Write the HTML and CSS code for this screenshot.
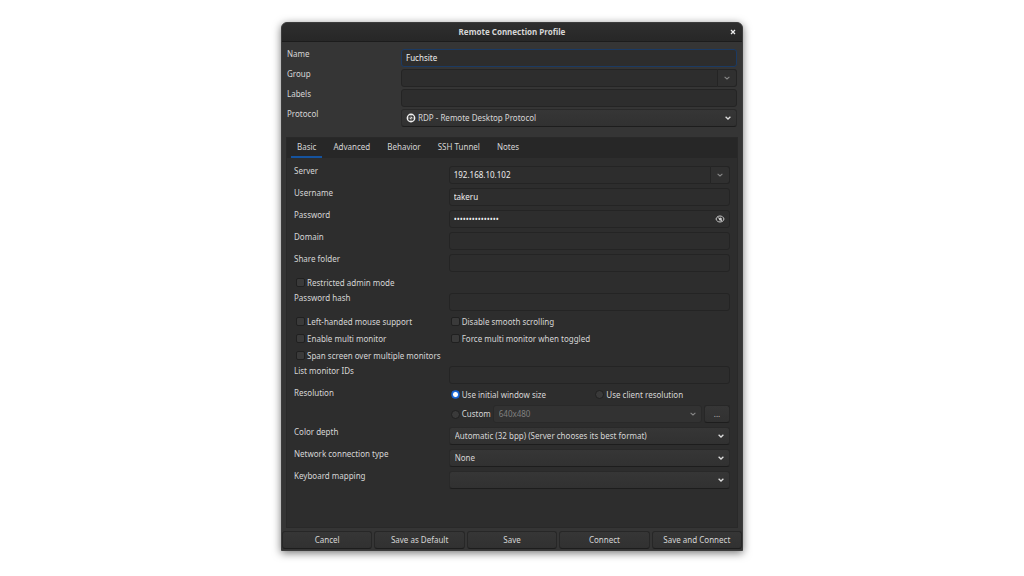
FILE: index.html
```html
<!DOCTYPE html>
<html lang="en">
<head>
    <meta charset="UTF-8">
    <meta name="viewport" content="width=device-width, initial-scale=1.0">
    <title>Remote Connection Profile</title>
    <link rel="stylesheet" href="styles.css">
</head>
<body>
    <form class="window">
        <header class="titlebar">
            <h1>Remote Connection Profile</h1>
            <button type="button" class="close" aria-label="Close">
                <svg viewBox="0 0 6 6" width="6" height="6"><path d="M1 1l4 4M5 1l-4 4" stroke="#eee" stroke-width="1.3"/></svg>
            </button>
        </header>

        <div class="profile">
            <label for="name">Name</label>
            <input type="text" id="name" class="field active" value="Fuchsite">
            <label for="group">Group</label>
            <div class="combo">
                <input type="text" id="group" class="field">
                <button type="button" class="drop" aria-label="Choose group"></button>
            </div>
            <label for="labels">Labels</label>
            <input type="text" id="labels" class="field">
            <label for="protocol">Protocol</label>
            <div class="protocol">
                <svg viewBox="0 0 10 10" width="10" height="10">
                    <circle cx="5" cy="5" r="3.7" fill="none" stroke="#eee" stroke-width="1.4"/>
                    <path d="M5 3.2L6.8 5 5 6.8 3.2 5z" fill="#ddd"/>
                    <path d="M5 1v1.6M5 7.4V9M1 5h1.6M7.4 5H9" stroke="#eee" stroke-width="1.2"/>
                    <path d="M4.3 4.3l1.4 1.4" stroke="#333" stroke-width=".7"/>
                </svg>
                <select id="protocol" class="select"><option>RDP - Remote Desktop Protocol</option></select>
            </div>
        </div>

        <div class="notebook">
            <nav class="tabs">
                <button type="button" class="tab current">Basic</button>
                <button type="button" class="tab">Advanced</button>
                <button type="button" class="tab">Behavior</button>
                <button type="button" class="tab">SSH Tunnel</button>
                <button type="button" class="tab">Notes</button>
            </nav>
            <div class="page">
                <label for="server">Server</label>
                <div class="combo">
                    <input type="text" id="server" class="field" value="192.168.10.102">
                    <button type="button" class="drop" aria-label="Recent servers"></button>
                </div>
                <label for="username">Username</label>
                <input type="text" id="username" class="field" value="takeru">
                <label for="password">Password</label>
                <div class="secret">
                    <input type="password" id="password" value="123456789012345">
                    <button type="button" class="reveal" aria-label="Show password">
                        <svg viewBox="0 0 10 10" width="10" height="10" fill="none" stroke="#ccc">
                            <path d="M1 5c1-4 7-4 8 0c-1 4-7 4-8 0z"/>
                            <circle cx="5.4" cy="5" r="1.5" fill="#ccc" stroke="none"/>
                            <path d="M2.4 3l5 4.4"/>
                        </svg>
                    </button>
                </div>
                <label for="domain">Domain</label>
                <input type="text" id="domain" class="field">
                <label for="share">Share folder</label>
                <input type="text" id="share" class="field">

                <label class="option wide"><input type="checkbox">Restricted admin mode</label>
                <label for="hash">Password hash</label>
                <input type="text" id="hash" class="field">

                <label class="option"><input type="checkbox">Left-handed mouse support</label>
                <label class="option"><input type="checkbox">Disable smooth scrolling</label>
                <label class="option"><input type="checkbox">Enable multi monitor</label>
                <label class="option"><input type="checkbox">Force multi monitor when toggled</label>
                <label class="option wide"><input type="checkbox">Span screen over multiple monitors</label>
                <label for="monitors">List monitor IDs</label>
                <input type="text" id="monitors" class="field">

                <span>Resolution</span>
                <div class="resolution">
                    <label class="option"><input type="radio" name="res" checked>Use initial window size</label>
                    <label class="option"><input type="radio" name="res">Use client resolution</label>
                </div>
                <div class="custom">
                    <label class="option"><input type="radio" name="res">Custom</label>
                    <select class="select" aria-label="Custom resolution" disabled><option>640x480</option></select>
                    <button type="button" class="button more">...</button>
                </div>

                <label for="depth">Color depth</label>
                <select id="depth" class="select"><option>Automatic (32 bpp) (Server chooses its best format)</option></select>
                <label for="network">Network connection type</label>
                <select id="network" class="select"><option>None</option></select>
                <label for="keyboard">Keyboard mapping</label>
                <select id="keyboard" class="select"><option></option></select>
            </div>
        </div>

        <footer class="actions">
            <button type="button" class="button">Cancel</button>
            <button type="button" class="button">Save as Default</button>
            <button type="button" class="button">Save</button>
            <button type="button" class="button">Connect</button>
            <button type="button" class="button">Save and Connect</button>
        </footer>
    </form>
</body>
</html>
```
FILE: styles.css
```css
* {
    box-sizing: border-box;
}
body {
    margin: 0;
    padding: 22px 0;
    background: #fff;
    color: #d6d6d6;
    font: 8px/10px "Noto Sans", "Open Sans", sans-serif;
}
input, select, button {
    margin: 0;
    color: inherit;
    font: inherit;
}
svg {
    display: block;
}
.window {
    max-width: 462px;
    margin: 0 auto;
    border: 1px solid #3c3c3c;
    border-radius: 6px 6px 0 0;
    background: #353535;
    box-shadow: 0 2px 8px rgba(0, 0, 0, 0.55);
}

/* title bar */
.titlebar {
    display: grid;
    grid-template-columns: 18px 1fr 18px;
    align-items: center;
    height: 19px;
    border-bottom: 1px solid #1c1c1c;
    border-radius: 5px 5px 0 0;
    background: linear-gradient(#2e2e2e, #272727);
}
.titlebar h1 {
    grid-column: 2;
    margin: 0;
    font-size: 8px;
    text-align: center;
}
.close {
    display: grid;
    place-items: center;
    padding: 0;
    border: none;
    background: none;
}

/* entries */
.field, .secret {
    width: 100%;
    min-width: 0;
    height: 18px;
    padding: 0 4px 1px;
    border: 1px solid #242424;
    border-radius: 3px;
    background: #2d2d2d;
    color: #eee;
    outline: none;
}
.active, .field:focus {
    border-color: #1b3a63;
}
.combo {
    display: flex;
}
.combo .field {
    flex: 1;
    border-radius: 3px 0 0 3px;
}
.drop {
    width: 19px;
    height: 18px;
    border: 1px solid #242424;
    border-left: none;
    border-radius: 0 3px 3px 0;
    background: #303030 url("data:image/svg+xml,%3Csvg xmlns='http://www.w3.org/2000/svg' width='6' height='4'%3E%3Cpath d='M.6.8L3 3 5.4.8' fill='none' stroke='%23888' stroke-width='1.1'/%3E%3C/svg%3E") center no-repeat;
}
.secret {
    display: flex;
    align-items: center;
}
.secret input {
    flex: 1;
    min-width: 0;
    padding: 0;
    border: none;
    background: none;
    outline: none;
}
.reveal {
    padding: 0;
    border: none;
    background: none;
}
.select {
    width: 100%;
    min-width: 0;
    height: 18px;
    padding: 0 20px 0 5px;
    border: 1px solid #292929;
    border-bottom-color: #1d1d1d;
    border-radius: 3px;
    appearance: none;
    background: url("data:image/svg+xml,%3Csvg xmlns='http://www.w3.org/2000/svg' width='6' height='4'%3E%3Cpath d='M.6.8L3 3 5.4.8' fill='none' stroke='%23ddd' stroke-width='1.3'/%3E%3C/svg%3E") right 5px center no-repeat, linear-gradient(#363636, #313131);
}
.select:disabled {
    color: #808080;
    opacity: 1;
    border-color: #292929;
    background: url("data:image/svg+xml,%3Csvg xmlns='http://www.w3.org/2000/svg' width='6' height='4'%3E%3Cpath d='M.6.8L3 3 5.4.8' fill='none' stroke='%23888' stroke-width='1.1'/%3E%3C/svg%3E") right 5px center no-repeat, #323232;
}
.button {
    height: 18px;
    padding: 0 4px;
    border: 1px solid #272727;
    border-bottom-color: #1d1d1d;
    border-radius: 3px;
    background: linear-gradient(#363636, #313131);
}

/* check boxes and radios */
.option {
    display: flex;
    align-items: center;
    gap: 2px;
    height: 13px;
    padding-left: 2px;
    white-space: nowrap;
}
.option input {
    width: 9px;
    height: 9px;
    border: 1px solid #202020;
    border-radius: 2px;
    appearance: none;
    background: #3a3a3a;
}
.option input[type="radio"] {
    border-radius: 50%;
}
.option input[type="radio"]:checked {
    border-color: #1a5fc4;
    background: radial-gradient(circle, #fff 2px, #1a6be0 3px);
}

/* profile form */
.profile {
    display: grid;
    grid-template-columns: 1fr 3fr;
    gap: 2px;
    padding: 7px 5px 10px;
}
.protocol {
    position: relative;
}
.protocol svg {
    position: absolute;
    top: 4px;
    left: 5px;
}
.protocol .select {
    padding-left: 16px;
}

/* notebook */
.notebook {
    margin: 0 4px;
    border: 1px solid #292929;
    background: #2d2d2d;
}
.tabs {
    display: flex;
    gap: 5px;
    height: 20px;
    padding: 0 4px;
    background: #272727;
}
.tab {
    padding: 0 6px;
    border: none;
    border-bottom: 2px solid transparent;
    background: none;
}
.current {
    border-bottom-color: #15539e;
}
.page {
    display: grid;
    grid-template-columns: 11fr 20fr;
    gap: 4px 0;
    padding: 8px 7px 38px;
}
.wide {
    grid-column: span 2;
}
.resolution {
    display: grid;
    grid-template-columns: 1fr 1fr;
}
.resolution .option + .option {
    padding-left: 6px;
}
.custom {
    display: flex;
    grid-column: 2;
    align-items: center;
    gap: 2px;
}
.custom .select {
    flex: 1;
}
.more {
    width: 26px;
    color: #bbb;
}

/* bottom buttons */
.actions {
    display: grid;
    grid-template-columns: repeat(5, 1fr);
    gap: 2px;
    padding: 3px 0 1px;
}
```
